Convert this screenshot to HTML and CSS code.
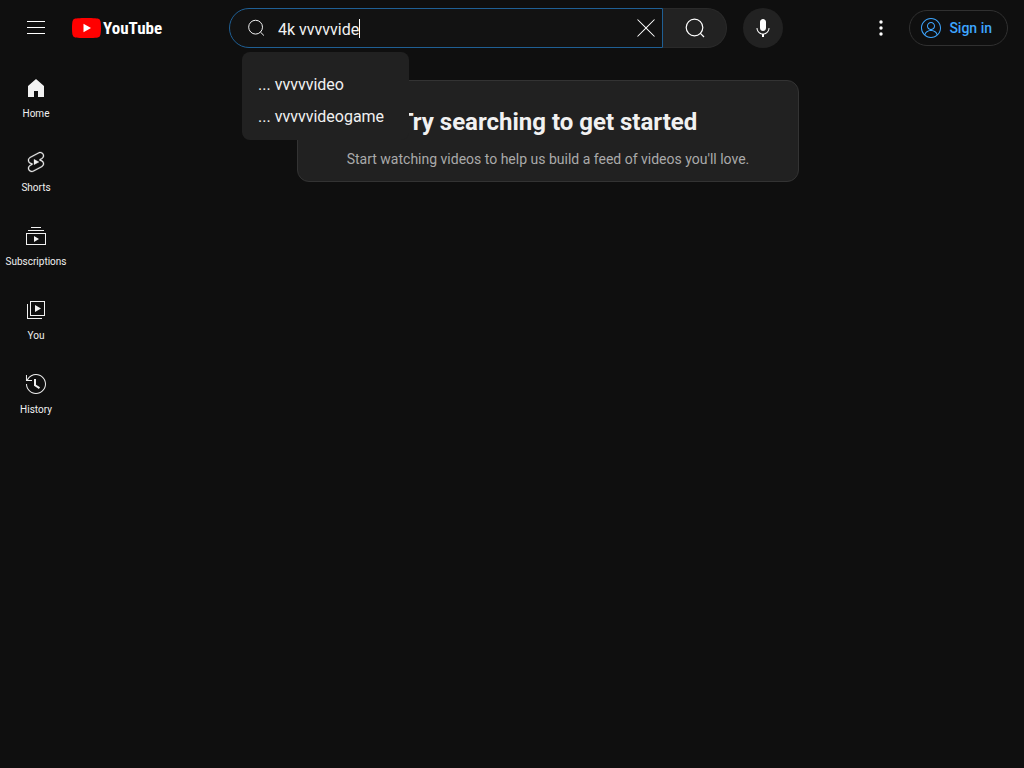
FILE: index.html
```html
<!DOCTYPE html>
<html lang="en">
<head>
  <meta charset="UTF-8">
  <meta name="viewport" content="width=device-width, initial-scale=1.0">
  <title>YouTube</title>

  <link rel="stylesheet" href="styles.css">
</head>
<body>

  <header class="masthead">
    <div class="start">
      <button class="icon-btn" aria-label="Guide">
        <svg class="icon" viewBox="0 0 24 24"><path d="M21 6H3V5h18v1zm0 5H3v1h18v-1zm0 6H3v1h18v-1z"/></svg>
      </button>
      <a class="logo" href="#" aria-label="YouTube Home">
        <svg class="logo-mark" viewBox="0 0 29 20">
          <path fill="#f00" d="M28.4 3.1A3.6 3.6 0 0 0 25.8.6C23.5 0 14.5 0 14.5 0S5.500 0 3.200.6A3.600 3.600 0 0 0 .6 3.100C0 5.400 0 10 0 10s0 4.600.6 6.900a3.600 3.600 0 0 0 2.600 2.500c2.300.6 11.300.6 11.300.6s9 0 11.300-.6a3.600 3.600 0 0 0 2.600-2.500c.6-2.300.6-6.900.6-6.900s0-4.600-.6-6.900z"/>
          <path fill="#fff" d="M11.500 14.300L19 10l-7.500-4.300z"/>
        </svg>
        <span class="logo-text">YouTube</span>
      </a>
    </div>

    <div class="center">
      <form class="search">
        <div class="search-box">
          <svg class="icon search-icon" viewBox="0 0 24 24"><circle cx="11.500" cy="11" r="8.300"/><path d="M17.200 16.800L21.500 21"/></svg>
          <div class="search-field">
            <input class="search-input" type="text" aria-label="Search" value="4k vvvvvide" autocomplete="off">
            <span class="caret"></span>
          </div>
          <button class="clear-btn" type="button" aria-label="Clear search query">
            <svg class="icon" viewBox="0 0 24 24"><path d="M12.710 12l8.150 8.150-.71.71L12 12.710l-8.150 8.150-.71-.71L11.290 12 3.150 3.850l.71-.71L12 11.290l8.150-8.150.71.71z"/></svg>
          </button>
        </div>
        <button class="search-btn" type="button" aria-label="Search">
          <svg class="icon search-icon-large" viewBox="0 0 24 24"><circle cx="11.500" cy="11.500" r="8.300"/><path d="M17.200 17.200L21 21"/></svg>
        </button>
        <ul class="suggestions">
          <li>... vvvvvideo</li>
          <li>... vvvvvideogame</li>
        </ul>
      </form>
      <button class="icon-btn mic-btn" aria-label="Search with your voice">
        <svg class="icon" viewBox="0 0 24 24"><path d="M12 3c-1.660 0-3 1.370-3 3.070v5.860c0 1.700 1.340 3.070 3 3.070s3-1.370 3-3.070V6.070C15 4.370 13.660 3 12 3zm6.500 9h-1c0 3.030-2.470 5.500-5.500 5.500S6.500 15.030 6.500 12h-1c0 3.240 2.390 5.930 5.500 6.410V21h2v-2.590c3.110-.48 5.500-3.170 5.500-6.410z"/></svg>
      </button>
    </div>

    <div class="end">
      <button class="icon-btn" aria-label="Settings">
        <svg class="icon" viewBox="0 0 24 24"><circle cx="12" cy="6" r="1.700"/><circle cx="12" cy="12" r="1.700"/><circle cx="12" cy="18" r="1.700"/></svg>
      </button>
      <a class="sign-in" href="#">
        <svg class="icon" viewBox="0 0 24 24"><path d="M12 2C6.480 2 2 6.480 2 12s4.480 10 10 10 10-4.480 10-10S17.520 2 12 2zM3 12c0-4.960 4.040-9 9-9s9 4.040 9 9c0 2.420-.97 4.620-2.530 6.240-.68-2.270-3.020-3.930-5.830-4.200C14.580 13.740 16 12.040 16 10c0-2.210-1.790-4-4-4s-4 1.790-4 4c0 2.040 1.420 3.740 3.350 4.040-2.810.27-5.150 1.930-5.820 4.200A8.960 8.960 0 0 1 3 12zm6-2c0-1.650 1.350-3 3-3s3 1.350 3 3-1.350 3-3 3-3-1.350-3-3zM6.400 19.050C6.630 16.760 9.050 15 12 15s5.370 1.760 5.600 4.050A8.950 8.950 0 0 1 12 21a8.950 8.950 0 0 1-5.600-1.950z"/></svg>
        Sign in
      </a>
    </div>
  </header>

  <div class="page">
    <nav class="guide">
      <a class="guide-item" href="#">
        <svg class="icon" viewBox="0 0 24 24"><path d="M4 10v11h6v-6h4v6h6V10l-8-7z"/></svg>
        Home
      </a>
      <a class="guide-item" href="#">
        <svg class="icon" viewBox="0 0 24 24"><path stroke="currentColor" stroke-width=".3" d="M10 14.650v-5.300L15 12l-5 2.650zm7.770-4.330l-1.200-.5L18 9.060c1.840-.96 2.530-3.230 1.560-5.060s-3.240-2.530-5.070-1.560L6 6.940c-1.290.68-2.070 2.040-2 3.490.07 1.420.93 2.670 2.220 3.250.03.01 1.200.5 1.200.5L6 14.930c-1.830.97-2.530 3.240-1.560 5.070.97 1.830 3.240 2.530 5.070 1.560l8.500-4.500c1.290-.68 2.060-2.040 1.990-3.490-.07-1.420-.94-2.680-2.230-3.250zm-.23 5.860l-8.500 4.500c-1.340.71-3.010.2-3.720-1.140-.71-1.340-.2-3.010 1.140-3.720l2.040-1.080v-1.210l-.69-.28-1.110-.46c-.99-.41-1.650-1.350-1.700-2.410-.05-1.060.52-2.060 1.460-2.560l8.500-4.500c1.340-.71 3.010-.2 3.720 1.140.71 1.340.2 3.010-1.140 3.720L15.500 9.260v1.210l1.800.74c.99.41 1.650 1.350 1.700 2.410.05 1.060-.52 2.060-1.460 2.560z"/></svg>
        Shorts
      </a>
      <a class="guide-item" href="#">
        <svg class="icon" viewBox="0 0 24 24"><path d="M10 18v-6l5 3-5 3zm7-15H7v1h10V3zm3 3H4v1h16V6zm2 3H2v12h20V9zM3 10h18v10H3V10z"/></svg>
        Subscriptions
      </a>
      <a class="guide-item" href="#">
        <svg class="icon" viewBox="0 0 24 24"><path d="M11 7l6 3.500-6 3.500V7zm7 13H4V6H3v15h15v-1zm3-2H6V3h15v15zM7 17h13V4H7v13z"/></svg>
        You
      </a>
      <a class="guide-item" href="#">
        <svg class="icon" viewBox="0 0 24 24"><path d="M14.970 16.950L10 13.870V7h2v5.760l4.030 2.490-1.060 1.700zM22 12c0 5.510-4.490 10-10 10S2 17.510 2 12h1c0 4.960 4.040 9 9 9s9-4.040 9-9-4.040-9-9-9C8.810 3 5.920 4.640 4.280 7.380c-.11.18-.22.37-.31.56L3.940 8H8v1H1.960V3h1v4.740c.04-.09.07-.17.11-.25.11-.22.230-.42.350-.63C5.220 3.860 8.510 2 12 2c5.510 0 10 4.490 10 10z"/></svg>
        History
      </a>
    </nav>

    <main class="content">
      <section class="nudge">
        <h1>Try searching to get started</h1>
        <p>Start watching videos to help us build a feed of videos you'll love.</p>
      </section>
    </main>
  </div>

</body>
</html>
```
FILE: styles.css
```css
* {
  box-sizing: border-box;
}

body {
  margin: 0;
  min-height: 100vh;
  background-color: #0f0f0f;
  color: #f1f1f1;
  font-family: Roboto, Arial, sans-serif;
}

a {
  color: inherit;
  text-decoration: none;
}

button {
  display: flex;
  align-items: center;
  justify-content: center;
  padding: 0;
  border: none;
  background: none;
  color: white;
  cursor: pointer;
}

.icon {
  display: block;
  flex: none;
  width: 24px;
  height: 24px;
  fill: currentColor;
}

.icon-btn {
  flex: none;
  width: 40px;
  height: 40px;
  border-radius: 50%;
}

/* top bar */
.masthead {
  display: flex;
  align-items: center;
  height: 56px;
  padding: 0 16px;
}

.start {
  display: flex;
  align-items: center;
  flex: 1 0 181px;
}

.logo {
  display: flex;
  align-items: center;
  gap: 2px;
  padding-left: 16px;
}

.logo-mark {
  width: 29px;
  height: 20px;
}

.logo-text {
  color: white;
  font-family: "Roboto Condensed", "Open Sans Condensed", "Liberation Sans Narrow", Roboto, sans-serif;
  font-size: 17px;
  font-weight: bold;
  line-height: 20px;
}

.center {
  display: flex;
  align-items: center;
  gap: 16px;
  flex: 0 1 732px;
  padding-left: 32px;
}

.search {
  position: relative;
  display: flex;
  flex: 1;
  height: 40px;
}

.search-box {
  display: flex;
  align-items: center;
  flex: 1;
  min-width: 0;
  padding-left: 16px;
  border: 1px solid #1f5f94;
  border-radius: 20px 0 0 20px;
  background-color: #121212;
}

.search-icon,
.search-icon-large {
  fill: none;
  stroke: currentColor;
  stroke-width: 1.2;
}

.search-icon {
  width: 20px;
  height: 20px;
}

.search-field {
  position: relative;
  flex: 1;
  min-width: 0;
  margin-left: 12px;
}

.search-input {
  display: block;
  width: 100%;
  height: 26px;
  padding: 2px 0 0;
  border: none;
  outline: none;
  background: none;
  color: #f1f1f1;
  font-family: inherit;
  font-size: 16px;
  line-height: 24px;
}

/* text cursor after the typed query */
.caret {
  position: absolute;
  top: 4px;
  left: 81px;
  width: 1px;
  height: 19px;
  background-color: white;
}

.clear-btn {
  width: 32px;
  height: 38px;
}

.search-btn {
  width: 64px;
  border: 1px solid #2a2a2a;
  border-left: none;
  border-radius: 0 20px 20px 0;
  background-color: #222;
}

.mic-btn {
  background-color: #222;
}

.suggestions {
  position: absolute;
  top: 44px;
  left: 13px;
  z-index: 1;
  margin: 0;
  padding: 17px 25px 7px 16px;
  border-radius: 8px;
  background-color: #212121;
  font-size: 16px;
  line-height: 32px;
  list-style: none;
  white-space: nowrap;
}

.end {
  display: flex;
  align-items: center;
  justify-content: flex-end;
  gap: 8px;
  flex: 1 0 225px;
}

.sign-in {
  display: flex;
  align-items: center;
  gap: 6px;
  height: 36px;
  padding: 0 15px 0 9px;
  border: 1px solid #303030;
  border-radius: 18px;
  color: #3ea6ff;
  font-size: 14px;
  font-weight: 500;
}

/* side guide and feed */
.page {
  display: flex;
}

.guide {
  flex: none;
  width: 72px;
  padding-top: 4px;
}

.guide-item {
  display: flex;
  flex-direction: column;
  align-items: center;
  gap: 7px;
  padding: 16px 0 13px;
  font-size: 10px;
  line-height: 14px;
}

.content {
  display: flex;
  align-items: flex-start;
  justify-content: center;
  flex: 1;
  padding-top: 24px;
}

.nudge {
  padding: 24px 49px 12px;
  border: 1px solid #333;
  border-radius: 12px;
  background-color: #212121;
  text-align: center;
}

.nudge h1 {
  margin: 0 0 10px;
  font-size: 24px;
  line-height: 34px;
}

.nudge p {
  margin: 0;
  color: #aaa;
  font-size: 14px;
  line-height: 20px;
}
```
